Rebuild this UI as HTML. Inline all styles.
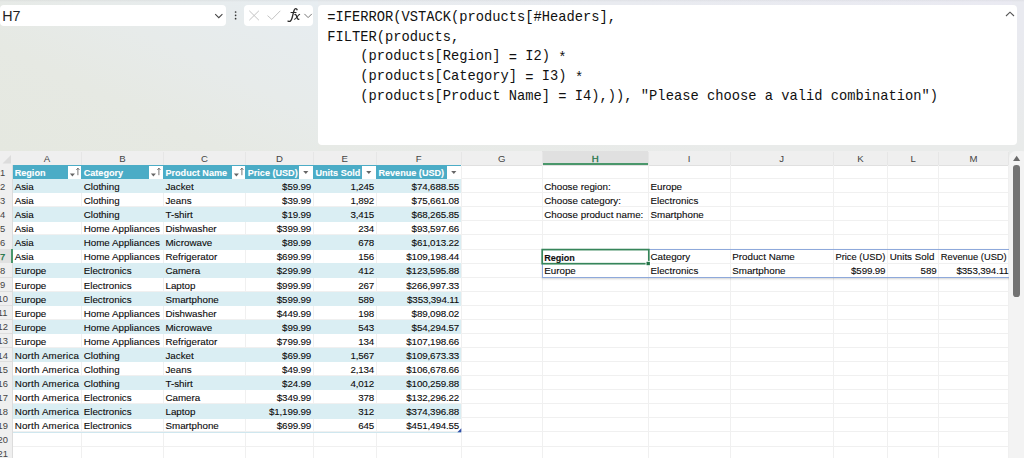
<!DOCTYPE html>
<html><head><meta charset="utf-8"><title>Excel</title>
<style>
*{margin:0;padding:0;box-sizing:border-box}
html,body{width:1024px;height:458px;overflow:hidden}
body{position:relative;font-family:"Liberation Sans",sans-serif;background:linear-gradient(90deg,#e8ebea 0%,#e8ecef 31%,#e9ebf0 60%,#eaeaf2 100%);}
.abs{position:absolute}
.nb{position:absolute;left:0px;top:5px;width:226px;height:20.5px;background:#fff;border-radius:4px}
.nbt{position:absolute;left:2.2px;top:7.2px;font-size:14.3px;line-height:18px;color:#222}
.btns{position:absolute;left:244.2px;top:5px;width:69.3px;height:20.5px;background:#fff;border-radius:4px}
.fb{position:absolute;left:317.7px;top:4.8px;width:699.3px;height:140.2px;background:#fff;border-radius:4px}
.ft{position:absolute;left:327.3px;top:7.8px;font-family:"Liberation Mono",monospace;font-size:13.75px;line-height:19.8px;color:#111;white-space:pre}
.ft i{font-style:normal;position:relative;top:1.5px}
.grid{position:absolute;left:0;top:151px;width:1024px;height:307px;background:#fff}
.ch{position:absolute;top:151px;height:14px;background:#efefef;color:#444;font-size:9.6px;line-height:13.5px;text-align:center;padding-top:1px}
.rh{position:absolute;left:0;width:12.5px;background:#efefef;color:#444;font-size:9.4px;white-space:nowrap;overflow:hidden}
.rh span{position:absolute;left:-7.3px;width:20px;text-align:center;top:0.6px}
.c{position:absolute;font-size:9.8px;color:#0a0a0a;-webkit-text-stroke:0.1px #0a0a0a;white-space:nowrap;overflow:visible;padding:0 2.2px}
.r{text-align:right;font-size:9.8px;letter-spacing:-0.15px;padding-right:2.1px}
.hd{background:#4bacc6;color:#fff;font-weight:bold;font-size:9.1px;-webkit-text-stroke:0.1px #fff;padding-top:1px}
.band{position:absolute;background:#daeef3}
.vl{position:absolute;width:1px;background:#f0f0f0}
.hl{position:absolute;height:1px;background:#f0f0f0}
.fbn{position:absolute;background:#fff;width:13.5px;height:13px}
</style></head><body>

<div class="abs" style="left:0;top:0;width:318px;height:152px;background:linear-gradient(to top right,#e5e8e0 0%,#e6e9e3 35%,#e7ebea 62%,#e7edf1 100%)"></div>
<div class="abs" style="left:318px;top:140px;width:706px;height:11px;background:linear-gradient(to right,#e7eae6,#e9ebea 60%)"></div>
<div class="abs" style="left:1012px;top:0px;width:12px;height:151px;background:linear-gradient(to bottom,#e9eaf0 20%,#e9ebea 100%)"></div>
<div class="nb"></div><div class="nbt">H7</div>
<svg class="abs" style="left:213px;top:10px" width="12" height="10" viewBox="0 0 12 10"><path d="M2.2 4.1 L5.8 7.7 L9.4 4.1" fill="none" stroke="#444" stroke-width="1.05"/></svg>
<svg class="abs" style="left:234px;top:8px" width="4" height="14" viewBox="0 0 4 14"><circle cx="1.6" cy="4" r="0.85" fill="#333"/><circle cx="1.6" cy="7.35" r="0.85" fill="#333"/><circle cx="1.6" cy="10.7" r="0.85" fill="#333"/></svg>
<div class="btns"></div>
<svg class="abs" style="left:245px;top:5px" width="69" height="21" viewBox="0 0 69 21"><path d="M4.3 5.8 L13.9 15.2 M13.9 5.8 L4.3 15.2" stroke="#c4c4c4" stroke-width="1" fill="none"/><path d="M22.5 10.6 L26.8 14.4 L35.3 5.8" stroke="#c4c4c4" stroke-width="1" fill="none"/><path d="M59.4 8.9 L63.1 12.6 L66.8 8.9" stroke="#777" stroke-width="1" fill="none"/></svg>
<svg class="abs" style="left:280px;top:4px" width="38" height="24" viewBox="0 0 38 24" fill="none" stroke="#2b2b2b" stroke-linecap="round"><path d="M17.1 5.7 C16.7 4.3 15 4.1 14.3 5.8 C13.5 7.6 12.7 12 11.8 14.8 C11.1 17 9.9 17.9 8 17.1" stroke-width="1.35"/><path d="M11 8.5 L16 8.5" stroke-width="1.1"/><path d="M14.9 10.6 C15.8 10.2 16.2 11 16.8 12.8 C17.4 14.6 17.7 15.7 18.9 15.2" stroke-width="1.25"/><path d="M19.7 10.4 C18.2 10.2 16.1 15.5 14.4 15.3" stroke-width="1.05"/></svg>
<div class="abs" style="left:0;top:0;width:1024px;height:2px;background:linear-gradient(rgba(0,0,0,0.045),rgba(0,0,0,0))"></div>
<div class="fb"></div>
<div class="ft"><i>=</i>IFERROR(VSTACK(products[#Headers],
FILTER(products,
    (products[Region] <i>=</i> I2) <i>*</i>
    (products[Category] <i>=</i> I3) <i>*</i>
    (products[Product Name] <i>=</i> I4),)), "Please choose a valid combination")</div>
<svg class="abs" style="left:1004px;top:9px" width="12" height="10" viewBox="0 0 12 10"><path d="M2 7 L6 3.2 L10 7" fill="none" stroke="#555" stroke-width="1.1"/></svg>
<div class="grid"></div>
<div class="abs" style="left:0;top:151px;width:1024px;height:14px;background:#efefef"></div>
<div class="ch" style="left:12.5px;width:69.0px">A</div>
<div class="ch" style="left:81.5px;width:81.75px">B</div>
<div class="ch" style="left:163.25px;width:82.25px">C</div>
<div class="ch" style="left:245.5px;width:67.75px">D</div>
<div class="ch" style="left:313.25px;width:63.0px">E</div>
<div class="ch" style="left:376.25px;width:85.0px">F</div>
<div class="ch" style="left:461.25px;width:80.75px">G</div>
<div class="ch" style="left:542px;width:106.25px;background:#e0e0e0;color:#217346;border-bottom:2px solid #4a976b;-webkit-text-stroke:0.3px #217346">H</div>
<div class="ch" style="left:648.25px;width:81.75px">I</div>
<div class="ch" style="left:730px;width:103.25px">J</div>
<div class="ch" style="left:833.25px;width:54.25px">K</div>
<div class="ch" style="left:887.5px;width:51.10000000000002px">L</div>
<div class="ch" style="left:938.6px;width:70.0px">M</div>
<div class="vl" style="left:81.0px;top:152px;height:13px;background:#e6e6e6"></div>
<div class="vl" style="left:162.75px;top:152px;height:13px;background:#e6e6e6"></div>
<div class="vl" style="left:245.0px;top:152px;height:13px;background:#e6e6e6"></div>
<div class="vl" style="left:312.75px;top:152px;height:13px;background:#e6e6e6"></div>
<div class="vl" style="left:375.75px;top:152px;height:13px;background:#e6e6e6"></div>
<div class="vl" style="left:460.75px;top:152px;height:13px;background:#e6e6e6"></div>
<div class="vl" style="left:541.5px;top:152px;height:13px;background:#e6e6e6"></div>
<div class="vl" style="left:647.75px;top:152px;height:13px;background:#e6e6e6"></div>
<div class="vl" style="left:729.5px;top:152px;height:13px;background:#e6e6e6"></div>
<div class="vl" style="left:832.75px;top:152px;height:13px;background:#e6e6e6"></div>
<div class="vl" style="left:887.0px;top:152px;height:13px;background:#e6e6e6"></div>
<div class="vl" style="left:938.1px;top:152px;height:13px;background:#e6e6e6"></div>
<div class="vl" style="left:1008.1px;top:152px;height:13px;background:#e6e6e6"></div>
<div class="hl" style="left:0;top:164.5px;width:1009px;background:#e0e0e0"></div>
<svg class="abs" style="left:0;top:152px" width="13" height="13" viewBox="0 0 13 13"><path d="M11 3 L11 11.5 L2.5 11.5 Z" fill="#dcdcdc"/></svg>
<div class="hl" style="left:12.5px;top:178.17px;width:996px"></div>
<div class="hl" style="left:12.5px;top:192.24px;width:996px"></div>
<div class="hl" style="left:12.5px;top:206.31px;width:996px"></div>
<div class="hl" style="left:12.5px;top:220.38px;width:996px"></div>
<div class="hl" style="left:12.5px;top:234.45px;width:996px"></div>
<div class="hl" style="left:12.5px;top:248.52px;width:996px"></div>
<div class="hl" style="left:12.5px;top:262.59px;width:996px"></div>
<div class="hl" style="left:12.5px;top:276.66px;width:996px"></div>
<div class="hl" style="left:12.5px;top:290.73px;width:996px"></div>
<div class="hl" style="left:12.5px;top:304.80px;width:996px"></div>
<div class="hl" style="left:12.5px;top:318.87px;width:996px"></div>
<div class="hl" style="left:12.5px;top:332.94px;width:996px"></div>
<div class="hl" style="left:12.5px;top:347.01px;width:996px"></div>
<div class="hl" style="left:12.5px;top:361.08px;width:996px"></div>
<div class="hl" style="left:12.5px;top:375.15px;width:996px"></div>
<div class="hl" style="left:12.5px;top:389.22px;width:996px"></div>
<div class="hl" style="left:12.5px;top:403.29px;width:996px"></div>
<div class="hl" style="left:12.5px;top:417.36px;width:996px"></div>
<div class="hl" style="left:12.5px;top:431.43px;width:996px"></div>
<div class="hl" style="left:12.5px;top:445.50px;width:996px"></div>
<div class="hl" style="left:12.5px;top:459.57px;width:996px"></div>
<div class="hl" style="left:12.5px;top:473.64px;width:996px"></div>
<div class="vl" style="left:81.0px;top:165px;height:293px"></div>
<div class="vl" style="left:162.75px;top:165px;height:293px"></div>
<div class="vl" style="left:245.0px;top:165px;height:293px"></div>
<div class="vl" style="left:312.75px;top:165px;height:293px"></div>
<div class="vl" style="left:375.75px;top:165px;height:293px"></div>
<div class="vl" style="left:460.75px;top:165px;height:293px"></div>
<div class="vl" style="left:541.5px;top:165px;height:293px"></div>
<div class="vl" style="left:647.75px;top:165px;height:293px"></div>
<div class="vl" style="left:729.5px;top:165px;height:293px"></div>
<div class="vl" style="left:832.75px;top:165px;height:293px"></div>
<div class="vl" style="left:887.0px;top:165px;height:293px"></div>
<div class="vl" style="left:938.1px;top:165px;height:293px"></div>
<div class="vl" style="left:1008.1px;top:165px;height:293px"></div>
<div class="rh" style="top:165.00px;height:14.07px;line-height:14.07px"><span>1</span></div>
<div class="hl" style="left:0;top:178.57px;width:12.5px;background:#dedede"></div>
<div class="rh" style="top:179.07px;height:14.07px;line-height:14.07px"><span>2</span></div>
<div class="hl" style="left:0;top:192.64px;width:12.5px;background:#dedede"></div>
<div class="rh" style="top:193.14px;height:14.07px;line-height:14.07px"><span>3</span></div>
<div class="hl" style="left:0;top:206.71px;width:12.5px;background:#dedede"></div>
<div class="rh" style="top:207.21px;height:14.07px;line-height:14.07px"><span>4</span></div>
<div class="hl" style="left:0;top:220.78px;width:12.5px;background:#dedede"></div>
<div class="rh" style="top:221.28px;height:14.07px;line-height:14.07px"><span>5</span></div>
<div class="hl" style="left:0;top:234.85px;width:12.5px;background:#dedede"></div>
<div class="rh" style="top:235.35px;height:14.07px;line-height:14.07px"><span>6</span></div>
<div class="hl" style="left:0;top:248.92px;width:12.5px;background:#dedede"></div>
<div class="rh" style="top:249.42px;height:14.07px;line-height:14.07px;background:#e1e1e1;color:#217346;-webkit-text-stroke:0.25px #217346"><span>7</span></div>
<div class="hl" style="left:0;top:262.99px;width:12.5px;background:#dedede"></div>
<div class="rh" style="top:263.49px;height:14.07px;line-height:14.07px"><span>8</span></div>
<div class="hl" style="left:0;top:277.06px;width:12.5px;background:#dedede"></div>
<div class="rh" style="top:277.56px;height:14.07px;line-height:14.07px"><span>9</span></div>
<div class="hl" style="left:0;top:291.13px;width:12.5px;background:#dedede"></div>
<div class="rh" style="top:291.63px;height:14.07px;line-height:14.07px"><span>10</span></div>
<div class="hl" style="left:0;top:305.20px;width:12.5px;background:#dedede"></div>
<div class="rh" style="top:305.70px;height:14.07px;line-height:14.07px"><span>11</span></div>
<div class="hl" style="left:0;top:319.27px;width:12.5px;background:#dedede"></div>
<div class="rh" style="top:319.77px;height:14.07px;line-height:14.07px"><span>12</span></div>
<div class="hl" style="left:0;top:333.34px;width:12.5px;background:#dedede"></div>
<div class="rh" style="top:333.84px;height:14.07px;line-height:14.07px"><span>13</span></div>
<div class="hl" style="left:0;top:347.41px;width:12.5px;background:#dedede"></div>
<div class="rh" style="top:347.91px;height:14.07px;line-height:14.07px"><span>14</span></div>
<div class="hl" style="left:0;top:361.48px;width:12.5px;background:#dedede"></div>
<div class="rh" style="top:361.98px;height:14.07px;line-height:14.07px"><span>15</span></div>
<div class="hl" style="left:0;top:375.55px;width:12.5px;background:#dedede"></div>
<div class="rh" style="top:376.05px;height:14.07px;line-height:14.07px"><span>16</span></div>
<div class="hl" style="left:0;top:389.62px;width:12.5px;background:#dedede"></div>
<div class="rh" style="top:390.12px;height:14.07px;line-height:14.07px"><span>17</span></div>
<div class="hl" style="left:0;top:403.69px;width:12.5px;background:#dedede"></div>
<div class="rh" style="top:404.19px;height:14.07px;line-height:14.07px"><span>18</span></div>
<div class="hl" style="left:0;top:417.76px;width:12.5px;background:#dedede"></div>
<div class="rh" style="top:418.26px;height:14.07px;line-height:14.07px"><span>19</span></div>
<div class="hl" style="left:0;top:431.83px;width:12.5px;background:#dedede"></div>
<div class="rh" style="top:432.33px;height:14.07px;line-height:14.07px"><span>20</span></div>
<div class="hl" style="left:0;top:445.90px;width:12.5px;background:#dedede"></div>
<div class="rh" style="top:446.40px;height:14.07px;line-height:14.07px"><span>21</span></div>
<div class="hl" style="left:0;top:459.97px;width:12.5px;background:#dedede"></div>
<div class="rh" style="top:460.47px;height:14.07px;line-height:14.07px"><span>22</span></div>
<div class="hl" style="left:0;top:474.04px;width:12.5px;background:#dedede"></div>
<div class="vl" style="left:12px;top:165px;height:293px;background:#dcdcdc"></div>
<div class="vl" style="left:11px;top:249.4px;height:14.1px;width:2px;background:#4a976b"></div>
<div class="band" style="left:12.5px;top:179.07px;width:448.75px;height:14.37px"></div>
<div class="band" style="left:12.5px;top:207.21px;width:448.75px;height:14.37px"></div>
<div class="band" style="left:12.5px;top:235.35px;width:448.75px;height:14.37px"></div>
<div class="band" style="left:12.5px;top:263.49px;width:448.75px;height:14.37px"></div>
<div class="band" style="left:12.5px;top:291.63px;width:448.75px;height:14.37px"></div>
<div class="band" style="left:12.5px;top:319.77px;width:448.75px;height:14.37px"></div>
<div class="band" style="left:12.5px;top:347.91px;width:448.75px;height:14.37px"></div>
<div class="band" style="left:12.5px;top:376.05px;width:448.75px;height:14.37px"></div>
<div class="band" style="left:12.5px;top:404.19px;width:448.75px;height:14.37px"></div>
<div class="hl" style="left:12.5px;top:431.63px;width:448.75px;background:#cfe7ef"></div>
<div class="abs" style="left:12.5px;top:165.0px;width:448.75px;height:14.07px;background:#4bacc6"></div>
<div class="c hd" style="left:12.5px;top:165.0px;width:69.0px;height:14.07px;line-height:15.07px;padding-left:2.2px">Region</div>
<div class="fbn" style="left:67.60px;top:165.6px"></div>
<svg class="abs" style="left:67.60px;top:165.6px" width="13.5" height="13" viewBox="0 0 13.5 13"><path d="M1.9 7.4 L6.9 7.4 L4.4 10.4 Z" fill="#666"/><path d="M9.9 9.2 L9.9 2.2 M8.4 3.9 L9.9 2.1 L11.4 3.9" stroke="#666" stroke-width="0.9" fill="none"/></svg>
<div class="c hd" style="left:81.5px;top:165.0px;width:81.75px;height:14.07px;line-height:15.07px">Category</div>
<div class="fbn" style="left:149.35px;top:165.6px"></div>
<svg class="abs" style="left:149.35px;top:165.6px" width="13.5" height="13" viewBox="0 0 13.5 13"><path d="M1.9 7.4 L6.9 7.4 L4.4 10.4 Z" fill="#666"/><path d="M9.9 9.2 L9.9 2.2 M8.4 3.9 L9.9 2.1 L11.4 3.9" stroke="#666" stroke-width="0.9" fill="none"/></svg>
<div class="c hd" style="left:163.25px;top:165.0px;width:82.25px;height:14.07px;line-height:15.07px">Product Name</div>
<div class="fbn" style="left:231.60px;top:165.6px"></div>
<svg class="abs" style="left:231.60px;top:165.6px" width="13.5" height="13" viewBox="0 0 13.5 13"><path d="M1.9 7.4 L6.9 7.4 L4.4 10.4 Z" fill="#666"/><path d="M9.9 9.2 L9.9 2.2 M8.4 3.9 L9.9 2.1 L11.4 3.9" stroke="#666" stroke-width="0.9" fill="none"/></svg>
<div class="c hd" style="left:245.5px;top:165.0px;width:67.75px;height:14.07px;line-height:15.07px">Price (USD)</div>
<div class="fbn" style="left:299.35px;top:165.6px"></div>
<svg class="abs" style="left:299.35px;top:165.6px" width="13.5" height="13" viewBox="0 0 13.5 13"><path d="M4.2 5.1 L9.4 5.1 L6.8 8 Z" fill="#666"/></svg>
<div class="c hd" style="left:313.25px;top:165.0px;width:63.0px;height:14.07px;line-height:15.07px">Units Sold</div>
<div class="fbn" style="left:362.35px;top:165.6px"></div>
<svg class="abs" style="left:362.35px;top:165.6px" width="13.5" height="13" viewBox="0 0 13.5 13"><path d="M4.2 5.1 L9.4 5.1 L6.8 8 Z" fill="#666"/></svg>
<div class="c hd" style="left:376.25px;top:165.0px;width:85.0px;height:14.07px;line-height:15.07px">Revenue (USD)</div>
<div class="fbn" style="left:447.35px;top:165.6px"></div>
<svg class="abs" style="left:447.35px;top:165.6px" width="13.5" height="13" viewBox="0 0 13.5 13"><path d="M4.2 5.1 L9.4 5.1 L6.8 8 Z" fill="#666"/></svg>
<div class="c" style="left:12.5px;top:179.07px;width:69.0px;height:14.07px;line-height:15.07px;padding-left:2.2px">Asia</div>
<div class="c" style="left:81.5px;top:179.07px;width:81.75px;height:14.07px;line-height:15.07px">Clothing</div>
<div class="c" style="left:163.25px;top:179.07px;width:82.25px;height:14.07px;line-height:15.07px">Jacket</div>
<div class="c r" style="left:245.5px;top:179.07px;width:67.75px;height:14.07px;line-height:15.07px">$59.99</div>
<div class="c r" style="left:313.25px;top:179.07px;width:63.0px;height:14.07px;line-height:15.07px">1,245</div>
<div class="c r" style="left:376.25px;top:179.07px;width:85.0px;height:14.07px;line-height:15.07px">$74,688.55</div>
<div class="c" style="left:12.5px;top:193.14px;width:69.0px;height:14.07px;line-height:15.07px;padding-left:2.2px">Asia</div>
<div class="c" style="left:81.5px;top:193.14px;width:81.75px;height:14.07px;line-height:15.07px">Clothing</div>
<div class="c" style="left:163.25px;top:193.14px;width:82.25px;height:14.07px;line-height:15.07px">Jeans</div>
<div class="c r" style="left:245.5px;top:193.14px;width:67.75px;height:14.07px;line-height:15.07px">$39.99</div>
<div class="c r" style="left:313.25px;top:193.14px;width:63.0px;height:14.07px;line-height:15.07px">1,892</div>
<div class="c r" style="left:376.25px;top:193.14px;width:85.0px;height:14.07px;line-height:15.07px">$75,661.08</div>
<div class="c" style="left:12.5px;top:207.21px;width:69.0px;height:14.07px;line-height:15.07px;padding-left:2.2px">Asia</div>
<div class="c" style="left:81.5px;top:207.21px;width:81.75px;height:14.07px;line-height:15.07px">Clothing</div>
<div class="c" style="left:163.25px;top:207.21px;width:82.25px;height:14.07px;line-height:15.07px">T-shirt</div>
<div class="c r" style="left:245.5px;top:207.21px;width:67.75px;height:14.07px;line-height:15.07px">$19.99</div>
<div class="c r" style="left:313.25px;top:207.21px;width:63.0px;height:14.07px;line-height:15.07px">3,415</div>
<div class="c r" style="left:376.25px;top:207.21px;width:85.0px;height:14.07px;line-height:15.07px">$68,265.85</div>
<div class="c" style="left:12.5px;top:221.28px;width:69.0px;height:14.07px;line-height:15.07px;padding-left:2.2px">Asia</div>
<div class="c" style="left:81.5px;top:221.28px;width:81.75px;height:14.07px;line-height:15.07px">Home Appliances</div>
<div class="c" style="left:163.25px;top:221.28px;width:82.25px;height:14.07px;line-height:15.07px">Dishwasher</div>
<div class="c r" style="left:245.5px;top:221.28px;width:67.75px;height:14.07px;line-height:15.07px">$399.99</div>
<div class="c r" style="left:313.25px;top:221.28px;width:63.0px;height:14.07px;line-height:15.07px">234</div>
<div class="c r" style="left:376.25px;top:221.28px;width:85.0px;height:14.07px;line-height:15.07px">$93,597.66</div>
<div class="c" style="left:12.5px;top:235.35px;width:69.0px;height:14.07px;line-height:15.07px;padding-left:2.2px">Asia</div>
<div class="c" style="left:81.5px;top:235.35px;width:81.75px;height:14.07px;line-height:15.07px">Home Appliances</div>
<div class="c" style="left:163.25px;top:235.35px;width:82.25px;height:14.07px;line-height:15.07px">Microwave</div>
<div class="c r" style="left:245.5px;top:235.35px;width:67.75px;height:14.07px;line-height:15.07px">$89.99</div>
<div class="c r" style="left:313.25px;top:235.35px;width:63.0px;height:14.07px;line-height:15.07px">678</div>
<div class="c r" style="left:376.25px;top:235.35px;width:85.0px;height:14.07px;line-height:15.07px">$61,013.22</div>
<div class="c" style="left:12.5px;top:249.42px;width:69.0px;height:14.07px;line-height:15.07px;padding-left:2.2px">Asia</div>
<div class="c" style="left:81.5px;top:249.42px;width:81.75px;height:14.07px;line-height:15.07px">Home Appliances</div>
<div class="c" style="left:163.25px;top:249.42px;width:82.25px;height:14.07px;line-height:15.07px">Refrigerator</div>
<div class="c r" style="left:245.5px;top:249.42px;width:67.75px;height:14.07px;line-height:15.07px">$699.99</div>
<div class="c r" style="left:313.25px;top:249.42px;width:63.0px;height:14.07px;line-height:15.07px">156</div>
<div class="c r" style="left:376.25px;top:249.42px;width:85.0px;height:14.07px;line-height:15.07px">$109,198.44</div>
<div class="c" style="left:12.5px;top:263.49px;width:69.0px;height:14.07px;line-height:15.07px;padding-left:2.2px">Europe</div>
<div class="c" style="left:81.5px;top:263.49px;width:81.75px;height:14.07px;line-height:15.07px">Electronics</div>
<div class="c" style="left:163.25px;top:263.49px;width:82.25px;height:14.07px;line-height:15.07px">Camera</div>
<div class="c r" style="left:245.5px;top:263.49px;width:67.75px;height:14.07px;line-height:15.07px">$299.99</div>
<div class="c r" style="left:313.25px;top:263.49px;width:63.0px;height:14.07px;line-height:15.07px">412</div>
<div class="c r" style="left:376.25px;top:263.49px;width:85.0px;height:14.07px;line-height:15.07px">$123,595.88</div>
<div class="c" style="left:12.5px;top:277.56px;width:69.0px;height:14.07px;line-height:15.07px;padding-left:2.2px">Europe</div>
<div class="c" style="left:81.5px;top:277.56px;width:81.75px;height:14.07px;line-height:15.07px">Electronics</div>
<div class="c" style="left:163.25px;top:277.56px;width:82.25px;height:14.07px;line-height:15.07px">Laptop</div>
<div class="c r" style="left:245.5px;top:277.56px;width:67.75px;height:14.07px;line-height:15.07px">$999.99</div>
<div class="c r" style="left:313.25px;top:277.56px;width:63.0px;height:14.07px;line-height:15.07px">267</div>
<div class="c r" style="left:376.25px;top:277.56px;width:85.0px;height:14.07px;line-height:15.07px">$266,997.33</div>
<div class="c" style="left:12.5px;top:291.63px;width:69.0px;height:14.07px;line-height:15.07px;padding-left:2.2px">Europe</div>
<div class="c" style="left:81.5px;top:291.63px;width:81.75px;height:14.07px;line-height:15.07px">Electronics</div>
<div class="c" style="left:163.25px;top:291.63px;width:82.25px;height:14.07px;line-height:15.07px">Smartphone</div>
<div class="c r" style="left:245.5px;top:291.63px;width:67.75px;height:14.07px;line-height:15.07px">$599.99</div>
<div class="c r" style="left:313.25px;top:291.63px;width:63.0px;height:14.07px;line-height:15.07px">589</div>
<div class="c r" style="left:376.25px;top:291.63px;width:85.0px;height:14.07px;line-height:15.07px">$353,394.11</div>
<div class="c" style="left:12.5px;top:305.70px;width:69.0px;height:14.07px;line-height:15.07px;padding-left:2.2px">Europe</div>
<div class="c" style="left:81.5px;top:305.70px;width:81.75px;height:14.07px;line-height:15.07px">Home Appliances</div>
<div class="c" style="left:163.25px;top:305.70px;width:82.25px;height:14.07px;line-height:15.07px">Dishwasher</div>
<div class="c r" style="left:245.5px;top:305.70px;width:67.75px;height:14.07px;line-height:15.07px">$449.99</div>
<div class="c r" style="left:313.25px;top:305.70px;width:63.0px;height:14.07px;line-height:15.07px">198</div>
<div class="c r" style="left:376.25px;top:305.70px;width:85.0px;height:14.07px;line-height:15.07px">$89,098.02</div>
<div class="c" style="left:12.5px;top:319.77px;width:69.0px;height:14.07px;line-height:15.07px;padding-left:2.2px">Europe</div>
<div class="c" style="left:81.5px;top:319.77px;width:81.75px;height:14.07px;line-height:15.07px">Home Appliances</div>
<div class="c" style="left:163.25px;top:319.77px;width:82.25px;height:14.07px;line-height:15.07px">Microwave</div>
<div class="c r" style="left:245.5px;top:319.77px;width:67.75px;height:14.07px;line-height:15.07px">$99.99</div>
<div class="c r" style="left:313.25px;top:319.77px;width:63.0px;height:14.07px;line-height:15.07px">543</div>
<div class="c r" style="left:376.25px;top:319.77px;width:85.0px;height:14.07px;line-height:15.07px">$54,294.57</div>
<div class="c" style="left:12.5px;top:333.84px;width:69.0px;height:14.07px;line-height:15.07px;padding-left:2.2px">Europe</div>
<div class="c" style="left:81.5px;top:333.84px;width:81.75px;height:14.07px;line-height:15.07px">Home Appliances</div>
<div class="c" style="left:163.25px;top:333.84px;width:82.25px;height:14.07px;line-height:15.07px">Refrigerator</div>
<div class="c r" style="left:245.5px;top:333.84px;width:67.75px;height:14.07px;line-height:15.07px">$799.99</div>
<div class="c r" style="left:313.25px;top:333.84px;width:63.0px;height:14.07px;line-height:15.07px">134</div>
<div class="c r" style="left:376.25px;top:333.84px;width:85.0px;height:14.07px;line-height:15.07px">$107,198.66</div>
<div class="c" style="left:12.5px;top:347.91px;width:69.0px;height:14.07px;line-height:15.07px;padding-left:2.2px;letter-spacing:0.18px">North America</div>
<div class="c" style="left:81.5px;top:347.91px;width:81.75px;height:14.07px;line-height:15.07px">Clothing</div>
<div class="c" style="left:163.25px;top:347.91px;width:82.25px;height:14.07px;line-height:15.07px">Jacket</div>
<div class="c r" style="left:245.5px;top:347.91px;width:67.75px;height:14.07px;line-height:15.07px">$69.99</div>
<div class="c r" style="left:313.25px;top:347.91px;width:63.0px;height:14.07px;line-height:15.07px">1,567</div>
<div class="c r" style="left:376.25px;top:347.91px;width:85.0px;height:14.07px;line-height:15.07px">$109,673.33</div>
<div class="c" style="left:12.5px;top:361.98px;width:69.0px;height:14.07px;line-height:15.07px;padding-left:2.2px;letter-spacing:0.18px">North America</div>
<div class="c" style="left:81.5px;top:361.98px;width:81.75px;height:14.07px;line-height:15.07px">Clothing</div>
<div class="c" style="left:163.25px;top:361.98px;width:82.25px;height:14.07px;line-height:15.07px">Jeans</div>
<div class="c r" style="left:245.5px;top:361.98px;width:67.75px;height:14.07px;line-height:15.07px">$49.99</div>
<div class="c r" style="left:313.25px;top:361.98px;width:63.0px;height:14.07px;line-height:15.07px">2,134</div>
<div class="c r" style="left:376.25px;top:361.98px;width:85.0px;height:14.07px;line-height:15.07px">$106,678.66</div>
<div class="c" style="left:12.5px;top:376.05px;width:69.0px;height:14.07px;line-height:15.07px;padding-left:2.2px;letter-spacing:0.18px">North America</div>
<div class="c" style="left:81.5px;top:376.05px;width:81.75px;height:14.07px;line-height:15.07px">Clothing</div>
<div class="c" style="left:163.25px;top:376.05px;width:82.25px;height:14.07px;line-height:15.07px">T-shirt</div>
<div class="c r" style="left:245.5px;top:376.05px;width:67.75px;height:14.07px;line-height:15.07px">$24.99</div>
<div class="c r" style="left:313.25px;top:376.05px;width:63.0px;height:14.07px;line-height:15.07px">4,012</div>
<div class="c r" style="left:376.25px;top:376.05px;width:85.0px;height:14.07px;line-height:15.07px">$100,259.88</div>
<div class="c" style="left:12.5px;top:390.12px;width:69.0px;height:14.07px;line-height:15.07px;padding-left:2.2px;letter-spacing:0.18px">North America</div>
<div class="c" style="left:81.5px;top:390.12px;width:81.75px;height:14.07px;line-height:15.07px">Electronics</div>
<div class="c" style="left:163.25px;top:390.12px;width:82.25px;height:14.07px;line-height:15.07px">Camera</div>
<div class="c r" style="left:245.5px;top:390.12px;width:67.75px;height:14.07px;line-height:15.07px">$349.99</div>
<div class="c r" style="left:313.25px;top:390.12px;width:63.0px;height:14.07px;line-height:15.07px">378</div>
<div class="c r" style="left:376.25px;top:390.12px;width:85.0px;height:14.07px;line-height:15.07px">$132,296.22</div>
<div class="c" style="left:12.5px;top:404.19px;width:69.0px;height:14.07px;line-height:15.07px;padding-left:2.2px;letter-spacing:0.18px">North America</div>
<div class="c" style="left:81.5px;top:404.19px;width:81.75px;height:14.07px;line-height:15.07px">Electronics</div>
<div class="c" style="left:163.25px;top:404.19px;width:82.25px;height:14.07px;line-height:15.07px">Laptop</div>
<div class="c r" style="left:245.5px;top:404.19px;width:67.75px;height:14.07px;line-height:15.07px">$1,199.99</div>
<div class="c r" style="left:313.25px;top:404.19px;width:63.0px;height:14.07px;line-height:15.07px">312</div>
<div class="c r" style="left:376.25px;top:404.19px;width:85.0px;height:14.07px;line-height:15.07px">$374,396.88</div>
<div class="c" style="left:12.5px;top:418.26px;width:69.0px;height:14.07px;line-height:15.07px;padding-left:2.2px;letter-spacing:0.18px">North America</div>
<div class="c" style="left:81.5px;top:418.26px;width:81.75px;height:14.07px;line-height:15.07px">Electronics</div>
<div class="c" style="left:163.25px;top:418.26px;width:82.25px;height:14.07px;line-height:15.07px">Smartphone</div>
<div class="c r" style="left:245.5px;top:418.26px;width:67.75px;height:14.07px;line-height:15.07px">$699.99</div>
<div class="c r" style="left:313.25px;top:418.26px;width:63.0px;height:14.07px;line-height:15.07px">645</div>
<div class="c r" style="left:376.25px;top:418.26px;width:85.0px;height:14.07px;line-height:15.07px">$451,494.55</div>
<svg class="abs" style="left:457px;top:428px" width="4.6" height="4.6" viewBox="0 0 4.6 4.6"><path d="M4.3 0.3 L4.3 4.3 L0.3 4.3 Z" fill="#2f4fa8"/></svg>
<div class="c" style="left:542px;top:179.07px;width:106.25px;height:14.07px;line-height:15.07px;">Choose region:</div>
<div class="c" style="left:648.25px;top:179.07px;width:81.75px;height:14.07px;line-height:15.07px;">Europe</div>
<div class="c" style="left:542px;top:193.14px;width:106.25px;height:14.07px;line-height:15.07px;">Choose category:</div>
<div class="c" style="left:648.25px;top:193.14px;width:81.75px;height:14.07px;line-height:15.07px;">Electronics</div>
<div class="c" style="left:542px;top:207.21px;width:106.25px;height:14.07px;line-height:15.07px;">Choose product name:</div>
<div class="c" style="left:648.25px;top:207.21px;width:81.75px;height:14.07px;line-height:15.07px;">Smartphone</div>
<div class="c" style="left:542px;top:249.42px;width:106.25px;height:14.07px;line-height:15.07px;font-weight:bold;font-size:9.05px;color:#111;padding-top:1.5px">Region</div>
<div class="c" style="left:648.25px;top:249.42px;width:81.75px;height:14.07px;line-height:15.07px;">Category</div>
<div class="c" style="left:730px;top:249.42px;width:103.25px;height:14.07px;line-height:15.07px;">Product Name</div>
<div class="c" style="left:833.25px;top:249.42px;width:54.25px;height:14.07px;line-height:15.07px;font-size:9.35px;padding-top:0.6px">Price (USD)</div>
<div class="c" style="left:887.5px;top:249.42px;width:51.10000000000002px;height:14.07px;line-height:15.07px;">Units Sold</div>
<div class="c" style="left:938.6px;top:249.42px;width:70.0px;height:14.07px;line-height:15.07px;font-size:9.35px;padding-top:0.6px">Revenue (USD)</div>
<div class="c" style="left:542px;top:263.49px;width:106.25px;height:14.07px;line-height:15.07px;">Europe</div>
<div class="c" style="left:648.25px;top:263.49px;width:81.75px;height:14.07px;line-height:15.07px;">Electronics</div>
<div class="c" style="left:730px;top:263.49px;width:103.25px;height:14.07px;line-height:15.07px;">Smartphone</div>
<div class="c r" style="left:833.25px;top:263.49px;width:54.25px;height:14.07px;line-height:15.07px;">$599.99</div>
<div class="c r" style="left:887.5px;top:263.49px;width:51.10000000000002px;height:14.07px;line-height:15.07px;">589</div>
<div class="c r" style="left:938.6px;top:263.49px;width:70.0px;height:14.07px;line-height:15.07px;padding-right:0">$353,394.11</div>
<div class="abs" style="left:541.5px;top:248.72px;width:471.5px;height:28.84px;border:1px solid #8ea9db;box-shadow:0 1px 2px rgba(0,0,0,0.18)"></div>
<svg class="abs" style="left:536px;top:244px" width="120" height="26" viewBox="0 0 120 26"><rect x="6.2" y="5.6" width="106.6" height="14.1" fill="none" stroke="#36855a" stroke-width="1.7"/><rect x="109.6" y="16.9" width="5" height="5" fill="#fff"/><rect x="110.5" y="17.8" width="3.4" height="3.4" fill="#217346"/></svg>
<div class="abs" style="left:1008.6px;top:151px;width:15.4px;height:307px;background:#e9ebea"></div>
<div class="abs" style="left:1008.6px;top:158px;width:1px;height:300px;background:#ebebeb"></div>
<div class="abs" style="left:1009.3px;top:151.3px;width:20px;height:320px;background:#f3f3f3;border-radius:7px"></div>
<svg class="abs" style="left:1012px;top:154px" width="10" height="9" viewBox="0 0 10 9"><path d="M1.1 7 L4.65 1.7 L8.2 7 Z" fill="#6a6a6a"/></svg>
<div class="abs" style="left:1013.3px;top:165.3px;width:6.3px;height:132px;background:#737373;border-radius:3.1px"></div>
</body></html>
